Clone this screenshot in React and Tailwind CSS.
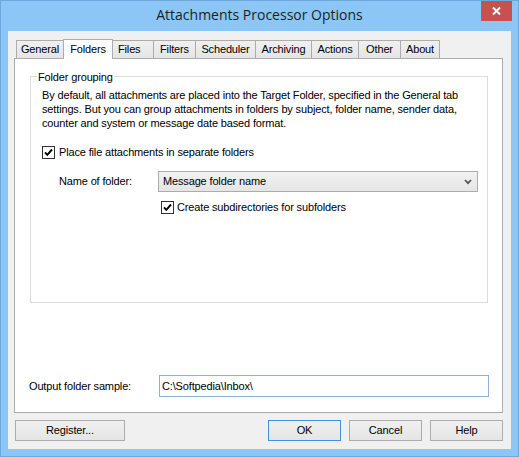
import React from 'react';

const TABS = [
  { label: 'General', w: 'w-[48px]' },
  { label: 'Folders', w: 'w-[50px]', active: true },
  { label: 'Files', w: 'w-[42px]', left: true },
  { label: 'Filters', w: 'w-[43px]' },
  { label: 'Scheduler', w: 'w-[61px]' },
  { label: 'Archiving', w: 'w-[57px]' },
  { label: 'Actions', w: 'w-[48px]' },
  { label: 'Other', w: 'w-[43px]' },
  { label: 'About', w: 'w-[40px]' },
];

function CheckBox() {
  return (
    <div className="w-[13px] h-[13px] border border-[#333] bg-white flex items-center justify-center shrink-0">
      <svg width="11" height="11" viewBox="0 0 11 11">
        <path d="M2 5.3 L4.3 7.8 L9 2.5" fill="none" stroke="#000" strokeWidth="1.9" />
      </svg>
    </div>
  );
}

function Button({ children, primary, w }) {
  return (
    <button
      type="button"
      className={`${w} h-[21px] border bg-gradient-to-b from-[#f0f0f0] to-[#e5e5e5] text-black flex items-center justify-center ${
        primary ? 'border-[#3c93e6]' : 'border-[#acacac]'
      }`}
    >
      {children}
    </button>
  );
}

export default function App() {
  return (
    <div className="w-[519px] h-[457px] bg-[#8bc6f7] border border-[#6ea9dd] flex flex-col overflow-hidden font-['Liberation_Sans',Arial,sans-serif] text-[11px] leading-[13px] tracking-[-0.15px] text-black">
      {/* Title bar */}
      <div className="relative h-[30px] shrink-0 flex items-center justify-center">
        <span className="font-['Open_Sans',sans-serif] text-[14px] leading-[20px] tracking-normal text-[#1e1e1e] mt-[-2px]">
          Attachments Processor Options
        </span>
        <div className="absolute right-[6px] top-[-1px] w-[31px] h-[21px] bg-[#c75050] flex items-center justify-center">
          <svg width="9" height="8" viewBox="0 0 9 8">
            <path d="M1 0.5 L8 7.5 M8 0.5 L1 7.5" stroke="#fff" strokeWidth="2" />
          </svg>
        </div>
      </div>

      {/* Client area */}
      <div className="mx-[7px] mb-[7px] flex-1 bg-[#f0f0f0] flex flex-col pt-[8px] px-[6px]">
        {/* Tabs */}
        <div className="h-[19px] flex items-end pl-[2px] relative z-10">
          {TABS.map((t, i) => (
            <div
              key={t.label}
              className={`${t.w} ${i > 0 ? '-ml-px' : ''} border border-[#acacac] flex items-center ${
                t.left ? 'justify-start pl-[5px]' : 'justify-center'
              } ${
                t.active
                  ? 'h-[20px] mb-[-1px] bg-white border-b-0 relative z-10'
                  : 'h-[18px] bg-gradient-to-b from-[#f0f0f0] to-[#e5e5e5] border-b-0'
              }`}
            >
              {t.label}
            </div>
          ))}
        </div>

        {/* Tab panel */}
        <div className="w-[489px] h-[355px] bg-white border border-[#acacac] flex flex-col">
          {/* Folder grouping group box */}
          <div className="relative mt-[17px] mx-[15px] mr-[14px] h-[227px] border border-[#dcdcdc] pl-[11px] pt-[11px]">
            <span className="absolute left-[6px] top-[-6px] bg-white px-[1px]">Folder grouping</span>
            <p className="leading-[14px]">
              By default, all attachments are placed into the Target Folder, specified in the General tab
              <br />
              settings. But you can group attachments in folders by subject, folder name, sender data,
              <br />
              counter and system or message date based format.
            </p>

            <div className="mt-[16px] flex items-center gap-[4px]">
              <CheckBox />
              <span>Place file attachments in separate folders</span>
            </div>

            <div className="mt-[12px] flex items-center pl-[17px]">
              <span className="w-[99px]">Name of folder:</span>
              <div className="w-[320px] h-[21px] border border-[#acacac] bg-gradient-to-b from-[#f2f2f2] to-[#e5e5e5] flex items-center justify-between pl-[4px] pr-[5px]">
                <span>Message folder name</span>
                <svg width="8" height="6" viewBox="0 0 8 6">
                  <path d="M1 1 L4 4.2 L7 1" fill="none" stroke="#555" strokeWidth="1.8" />
                </svg>
              </div>
            </div>

            <div className="mt-[9px] flex items-center gap-[3px] pl-[119px]">
              <CheckBox />
              <span>Create subdirectories for subfolders</span>
            </div>
          </div>

          {/* Output folder sample */}
          <div className="mt-[72px] ml-[14px] flex items-center">
            <span className="w-[130px]">Output folder sample:</span>
            <div className="w-[330px] h-[22px] border border-[#8fb1da] bg-white flex items-center pl-[2px]">
              C:\Softpedia\Inbox\
            </div>
          </div>
        </div>

        {/* Buttons */}
        <div className="mt-[7px] w-[489px] flex items-center pl-[1px]">
          <Button w="w-[110px]">Register...</Button>
          <div className="ml-auto flex gap-[8px]">
            <Button w="w-[73px]" primary>OK</Button>
            <Button w="w-[73px]">Cancel</Button>
            <Button w="w-[73px]">Help</Button>
          </div>
        </div>
      </div>
    </div>
  );
}
